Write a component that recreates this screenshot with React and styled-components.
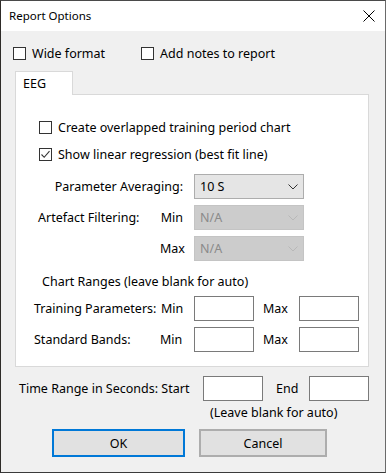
import React from "react";
import styled, { createGlobalStyle } from "styled-components";

const GlobalStyle = createGlobalStyle`
  html, body {
    margin: 0;
    padding: 0;
    background: #f0f0f0;
  }
  * {
    box-sizing: border-box;
  }
`;

const FONT = `"Noto Sans", "Open Sans", sans-serif`;

function CheckBox({ checked, label }) {
  return (
    <CheckRow>
      <Box>
        {checked && (
          <svg width="11" height="11" viewBox="0 0 11 11">
            <path d="M1.5 5.5 L4.2 8.3 L9.5 2.2" fill="none" stroke="#333" strokeWidth="1.1" />
          </svg>
        )}
      </Box>
      <span>{label}</span>
    </CheckRow>
  );
}

function Select({ value, disabled }) {
  return (
    <SelectBox $disabled={disabled}>
      <span>{value}</span>
      <svg width="10" height="6" viewBox="0 0 10 6">
        <path d="M0.5 0.5 L5 5 L9.5 0.5" fill="none" stroke={disabled ? "#b8b8b8" : "#333"} strokeWidth="1" />
      </svg>
    </SelectBox>
  );
}

export default function App() {
  return (
    <>
      <GlobalStyle />
      <Window>
        <TitleBar>
          <span>Report Options</span>
          <svg width="12" height="12" viewBox="0 0 12 12">
            <path d="M0.5 0.5 L11.5 11.5 M11.5 0.5 L0.5 11.5" stroke="#000" strokeWidth="1" />
          </svg>
        </TitleBar>

        <Body>
          <TopChecks>
            <CheckBox label="Wide format" />
            <CheckBox label="Add notes to report" />
          </TopChecks>

          <Tabs>
            <Tab>EEG</Tab>
            <Panel>
              <CheckBox label="Create overlapped training period chart" />
              <CheckBox checked label="Show linear regression (best fit line)" />

              <SelectGrid>
                <Label $span $end>Parameter Averaging:</Label>
                <Select value="10 S" />
                <Label>Artefact Filtering:</Label>
                <Label $end>Min</Label>
                <Select value="N/A" disabled />
                <span />
                <Label $end>Max</Label>
                <Select value="N/A" disabled />
              </SelectGrid>

              <Heading>Chart Ranges (leave blank for auto)</Heading>

              <RangeGrid>
                <Label>Training Parameters:</Label>
                <Label $pad={1}>Min</Label>
                <Field />
                <Label $pad={9}>Max</Label>
                <Field />
                <Label>Standard Bands:</Label>
                <Label>Min</Label>
                <Field />
                <Label $pad={9}>Max</Label>
                <Field />
              </RangeGrid>
            </Panel>
          </Tabs>

          <TimeRow>
            <TimeLabel $w={184}>Time Range in Seconds: Start</TimeLabel>
            <Field />
            <TimeLabel $w={46} $pad={13}>End</TimeLabel>
            <Field />
          </TimeRow>
          <Hint>(Leave blank for auto)</Hint>

          <Buttons>
            <Button $primary $w={133}>OK</Button>
            <Button $w={128}>Cancel</Button>
          </Buttons>
        </Body>
      </Window>
    </>
  );
}

const Window = styled.div`
  width: 386px;
  height: 473px;
  display: flex;
  flex-direction: column;
  border: 1px solid #4a4a4a;
  border-left-color: #2e2b28;
  border-right-color: #6a6a6a;
  border-bottom-color: #3a3a3a;
  background: #f0f0f0;
  font-family: ${FONT};
  font-size: 12.5px;
  color: #000;
`;

const TitleBar = styled.div`
  height: 30px;
  flex: none;
  background: #fff;
  display: flex;
  align-items: center;
  justify-content: space-between;
  padding: 0 10px 0 8px;
  span {
    font-size: 11.5px;
    padding-bottom: 1px;
  }
`;

const Body = styled.div`
  flex: 1;
  padding: 12px 12px 0 12px;
  display: flex;
  flex-direction: column;
`;

const TopChecks = styled.div`
  display: flex;
  gap: 36px;
  height: 20px;
`;

const CheckRow = styled.label`
  display: flex;
  align-items: center;
  gap: 6px;
  height: 20px;
  white-space: nowrap;
`;

const Box = styled.span`
  width: 13px;
  height: 13px;
  flex: none;
  border: 1px solid #333;
  background: #fff;
  display: flex;
  align-items: center;
  justify-content: center;
`;

const Tabs = styled.div`
  margin: 8px 0 0 2px;
  display: flex;
  flex-direction: column;
  align-items: flex-start;
`;

const Tab = styled.div`
  position: relative;
  z-index: 1;
  width: 58px;
  height: 24px;
  margin-bottom: -1px;
  padding: 3px 0 0 7px;
  background: #fff;
  border: 1px solid #d9d9d9;
  border-bottom: none;
`;

const Panel = styled.div`
  width: 354px;
  height: 273px;
  background: #fff;
  border: 1px solid #d9d9d9;
  padding: 22px 0 0 23px;
  display: flex;
  flex-direction: column;
  gap: 7px;
`;

const SelectGrid = styled.div`
  display: grid;
  grid-template-columns: 122px 34px 110px;
  grid-auto-rows: 25px;
  row-gap: 6px;
  align-items: center;
  margin: 3px 0 0 -1px;
`;

const Label = styled.span`
  white-space: nowrap;
  grid-column: ${(p) => (p.$span ? "span 2" : "auto")};
  text-align: ${(p) => (p.$end ? "right" : "left")};
  padding-right: ${(p) => (p.$end ? "11px" : "0")};
  padding-left: ${(p) => (p.$pad ? `${p.$pad}px` : "0")};
`;

const SelectBox = styled.div`
  height: 25px;
  display: flex;
  align-items: center;
  justify-content: space-between;
  padding: 0 5px 0 5px;
  border: 1px solid ${(p) => (p.$disabled ? "#c4c4c4" : "#adadad")};
  background: ${(p) => (p.$disabled ? "#cccccc" : "#e5e5e5")};
  color: ${(p) => (p.$disabled ? "#8a8a8a" : "#000")};
`;

const Heading = styled.div`
  height: 20px;
  line-height: 20px;
  margin: 4px 0 0 3px;
`;

const RangeGrid = styled.div`
  display: grid;
  grid-template-columns: 126px 34px 60px 45px 60px;
  grid-auto-rows: 25px;
  row-gap: 6px;
  align-items: center;
  margin: -3px 0 0 -5px;
`;

const Field = styled.div`
  height: 25px;
  width: 60px;
  flex: none;
  border: 1px solid #7a7a7a;
  background: #fff;
`;

const TimeRow = styled.div`
  display: flex;
  align-items: center;
  height: 25px;
  margin: 9px 0 0 6px;
`;

const TimeLabel = styled.span`
  width: ${(p) => p.$w}px;
  flex: none;
  padding-left: ${(p) => p.$pad || 0}px;
  white-space: nowrap;
`;

const Hint = styled.div`
  height: 18px;
  line-height: 18px;
  margin: 3px 0 0 197px;
`;

const Buttons = styled.div`
  display: flex;
  gap: 14px;
  margin: 7px 0 0 39px;
`;

const Button = styled.button`
  width: ${(p) => p.$w}px;
  height: 28px;
  font: inherit;
  color: #000;
  background: #e1e1e1;
  border: 2px solid ${(p) => (p.$primary ? "#0078d7" : "#adadad")};
  padding: 0;
`;
